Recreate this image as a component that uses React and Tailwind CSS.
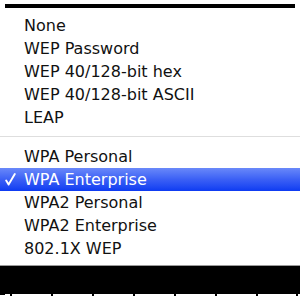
import React from "react";

const groupA = ["None", "WEP Password", "WEP 40/128-bit hex", "WEP 40/128-bit ASCII", "LEAP"];
const groupB = ["WPA Personal", "WPA Enterprise", "WPA2 Personal", "WPA2 Enterprise", "802.1X WEP"];

function Row({ label, selected }) {
  return (
    <div
      className={
        "relative h-[23px] leading-[23px] pl-[24px] whitespace-nowrap " +
        (selected ? "bg-gradient-to-b from-[#6a88f9] via-[#3b5ff5] to-[#0d3af2] text-white" : "text-[#111]")
      }
    >
      {selected && (
        <svg
          className="absolute left-[5px] top-[5px]"
          width="11"
          height="13"
          viewBox="0 0 11 13"
          fill="none"
        >
          <path
            d="M1.2 7.6 L3.6 11.6 L9.8 1"
            stroke="white"
            strokeWidth="1.9"
            strokeLinecap="round"
            strokeLinejoin="round"
          />
        </svg>
      )}
      {label}
    </div>
  );
}

export default function App() {
  const ticks = [10, 51, 92, 133, 174, 215, 256, 296];
  return (
    <div
      className="w-[300px] h-[300px] bg-white flex flex-col overflow-hidden text-[16px]"
      style={{ fontFamily: '"DejaVu Sans", "Liberation Sans", sans-serif' }}
    >
      <div className="h-[4px]" />
      <div className="h-[4px] mx-[5px] bg-black" />
      <div className="h-[6px]" />
      {groupA.map((l) => (
        <Row key={l} label={l} />
      ))}
      <div className="h-[7px]" />
      <div className="h-[1px] bg-[#dedede]" />
      <div className="h-[8px]" />
      {groupB.map((l) => (
        <Row key={l} label={l} selected={l === "WPA Enterprise"} />
      ))}
      <div className="h-[5px]" />
      <div className="h-[1px] bg-[#9a9a9a]" />
      <div className="h-[28px] bg-black" />
      <div className="relative flex-1 bg-white">
        <div className="absolute left-0 top-0 w-[5px] h-[1px] bg-black" />
        {ticks.map((x) => (
          <div
            key={x}
            className="absolute top-0 w-[2px] h-[2px] bg-black"
            style={{ left: x }}
          />
        ))}
      </div>
    </div>
  );
}
